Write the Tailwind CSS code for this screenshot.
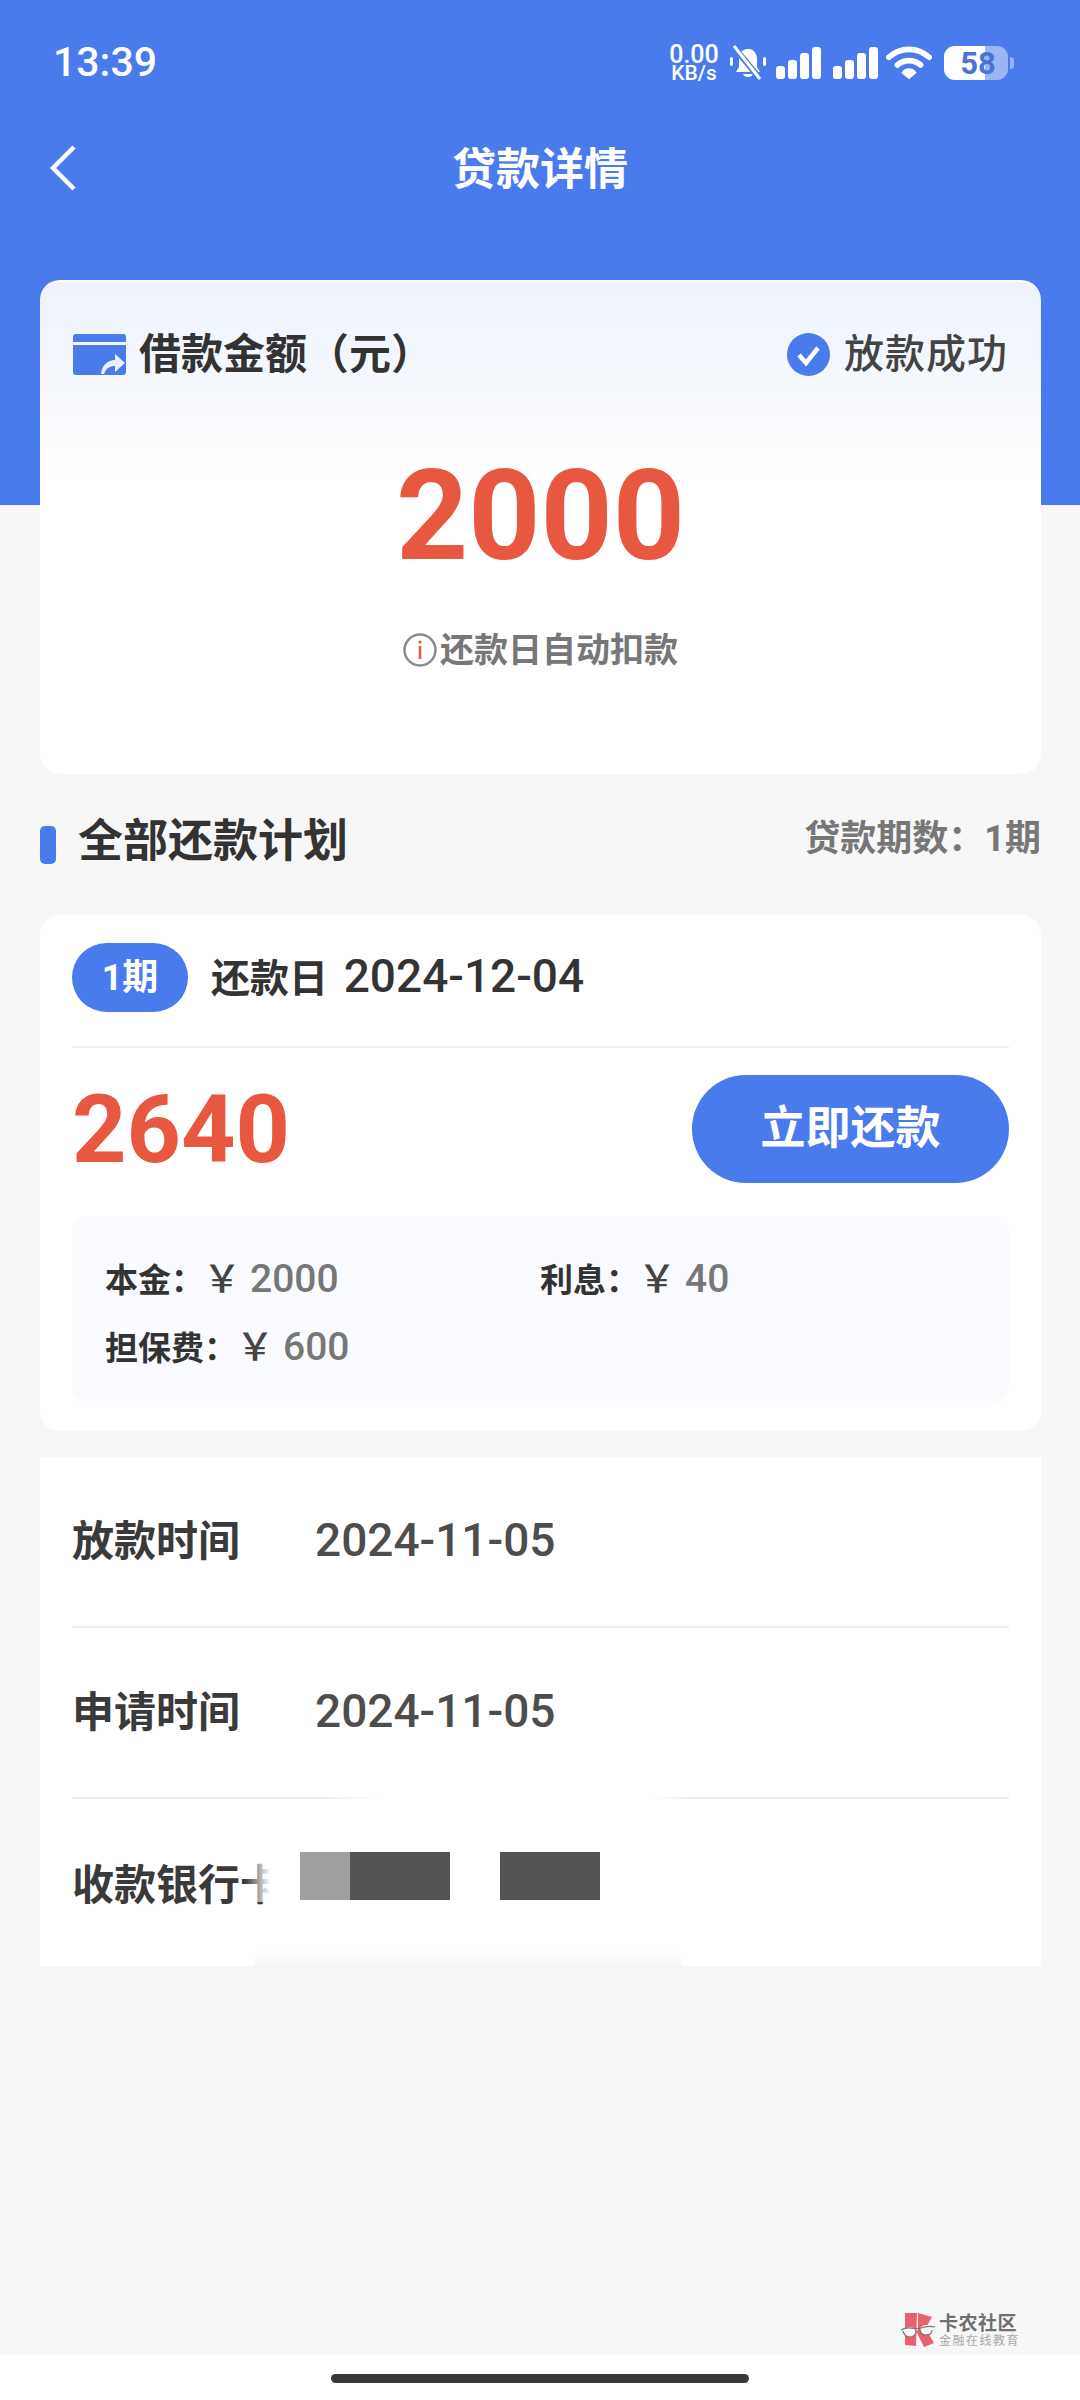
<!DOCTYPE html>
<html lang="zh-CN">

<head>
  <meta charset="UTF-8" />
  <meta name="viewport" content="width=device-width, initial-scale=1.0" />
  <title>贷款详情</title>
  <script src="https://cdn.jsdelivr.net/npm/@tailwindcss/browser@4"></script>
</head>

<body class="font-['Roboto','Noto_Sans_CJK_SC',sans-serif]">
  <div class="relative w-[1080px] h-[2400px] overflow-hidden bg-[#f7f7f7] flex flex-col text-[#333]">

    <!-- Blue header -->
    <header class="h-[505px] shrink-0 bg-[#4a7bec] text-white">
      <!-- Status bar -->
      <div class="h-[122px] pl-[53px] pr-[66px] flex items-center justify-between">
        <span class="mt-[2px] text-[41px] font-medium leading-none">13:39</span>
        <div class="mt-[4px] flex items-center">
          <div class="w-[50px] flex flex-col items-center font-medium">
            <span class="text-[25px] leading-[20px]">0.00</span>
            <span class="text-[21px] leading-[17px]">KB/s</span>
          </div>
          <svg class="ml-[10px]" width="38" height="36" viewBox="0 0 38 36" fill="white">
            <path d="M19 4c-6 0-9 5-9 10v8l-3 5h24l-3-5v-8c0-5-3-10-9-10z" />
            <path d="M14 29h10c-1 4-9 4-10 0z" />
            <rect x="1" y="12" width="3" height="9" rx="1.5" />
            <rect x="34" y="12" width="3" height="9" rx="1.5" />
            <path d="M4 1 32 35" stroke="#4a7bec" stroke-width="6" />
            <path d="M5 1 31 34" stroke="white" stroke-width="3" />
          </svg>
          <svg class="ml-[9px]" width="46" height="34" viewBox="0 0 46 34" fill="white">
            <rect x="0" y="20" width="9" height="13" rx="3" />
            <rect x="12" y="14" width="9" height="19" rx="3" />
            <rect x="24" y="7" width="9" height="26" rx="3" />
            <rect x="36" y="1" width="9" height="32" rx="3" />
          </svg>
          <svg class="ml-[11px]" width="46" height="34" viewBox="0 0 46 34" fill="white">
            <rect x="0" y="20" width="9" height="13" rx="3" />
            <rect x="12" y="14" width="9" height="19" rx="3" />
            <rect x="24" y="7" width="9" height="26" rx="3" />
            <rect x="36" y="1" width="9" height="32" rx="3" />
          </svg>
          <svg class="ml-[7px]" width="46" height="36" viewBox="0 0 48 36" fill="none" stroke="white" stroke-width="6" stroke-linecap="round">
            <path d="M3 12C15 1 33 1 45 12" />
            <path d="M12 20C19 14 29 14 36 20" />
            <path d="M18 28 24 33 30 28C27 24 21 24 18 28z" fill="white" stroke-width="3" />
          </svg>
          <div class="relative ml-[12px] w-[64px] h-[34px] rounded-[11px] bg-white/45 overflow-hidden">
            <div class="absolute inset-y-0 left-0 w-[41px] bg-white"></div>
            <span class="absolute inset-0 flex items-center justify-center pl-[4px] text-[31px] font-bold leading-none text-[#4a73d8]">58</span>
          </div>
          <div class="ml-[2px] w-[4px] h-[12px] rounded-r-full bg-white/45"></div>
        </div>
      </div>
      <!-- Nav -->
      <div class="relative h-[92px] flex items-center justify-center">
        <svg class="absolute left-[48px] top-[23px]" width="30" height="46" viewBox="0 0 30 46" fill="none" stroke="white" stroke-width="4.5">
          <path d="M26 2 5 23l21 21" />
        </svg>
        <h1 class="mt-[4px] text-[44px] font-bold leading-none">贷款详情</h1>
      </div>
    </header>

    <main class="flex-1 -mt-[225px] pl-[40px] pr-[39px] flex flex-col">
      <!-- Amount card -->
      <section class="h-[494px] rounded-[20px] border-t-2 border-white/70 bg-linear-to-b from-[#edf2fc] to-white to-[40%] px-[33px] flex flex-col items-center">
        <div class="w-full pt-[51px] flex items-center justify-between">
          <div class="flex items-center">
            <svg width="53" height="41" viewBox="0 0 53 41">
              <path d="M0 8V3a3 3 0 0 1 3-3h47a3 3 0 0 1 3 3v5z" fill="#4a7bec" />
              <path d="M0 11h53v27a3 3 0 0 1-3 3H3a3 3 0 0 1-3-3z" fill="#4a7bec" />
              <path d="M28 40c1-9 7-14 14-14v-6l10 9-10 9v-6c-5 0-9 2-11 8z" fill="#eaf0fd" />
            </svg>
            <span class="ml-[13px] text-[42px] font-bold leading-none">借款金额（元）</span>
          </div>
          <div class="flex items-center">
            <svg width="43" height="43" viewBox="0 0 43 43" fill="none">
              <circle cx="21.5" cy="21.5" r="21.5" fill="#4a7bec" />
              <path d="M12 22l7 8 12-15" stroke="white" stroke-width="4.5" />
            </svg>
            <span class="ml-[14px] text-[40px] tracking-[1px] font-medium leading-none text-[#444]">放款成功</span>
          </div>
        </div>
        <div class="mt-[77px] text-[126px] font-bold leading-none text-[#e8573f]">2000</div>
        <div class="mt-[54px] flex items-center text-[34px] font-bold leading-none text-[#777]">
          <svg width="34" height="34" viewBox="0 0 34 34" fill="none">
            <circle cx="17" cy="17" r="15.5" stroke="#8c8c8c" stroke-width="2.5" />
            <path d="M17 13v13" stroke="#e8573f" stroke-width="2.5" />
            <circle cx="17" cy="9" r="1.6" fill="#e8573f" />
          </svg>
          <span class="ml-[3px]">还款日自动扣款</span>
        </div>
      </section>

      <!-- Section title -->
      <div class="h-[141px] flex items-center justify-between">
        <div class="flex items-center">
          <span class="w-[16px] h-[38px] rounded-[5px] bg-[#4a7bec]"></span>
          <h2 class="-mt-[6px] ml-[22px] text-[45px] font-bold leading-none">全部还款计划</h2>
        </div>
        <span class="-mt-[12px] text-[36px] font-bold leading-none text-[#777]">贷款期数：1期</span>
      </div>

      <!-- Repayment plan card -->
      <section class="h-[516px] rounded-[20px] bg-white px-[32px] flex flex-col">
        <div class="h-[133px] shrink-0 border-b-2 border-[#f0f0f0] pb-[6px] flex items-center">
          <span class="w-[116px] h-[69px] rounded-full bg-[#4a7bec] text-white text-[36px] font-bold leading-none flex items-center justify-center">1期</span>
          <span class="-mt-[4px] ml-[23px] text-[39px] font-bold leading-none">还款日 <span class="ml-[6px] text-[46px] font-medium">2024-12-04</span></span>
        </div>
        <div class="mt-[27px] flex items-center justify-between">
          <span class="text-[95px] font-bold leading-none text-[#e8573f]">2640</span>
          <button class="w-[317px] h-[108px] rounded-full bg-[#4a7bec] text-white text-[45px] font-bold">立即还款</button>
        </div>
        <div class="mt-[33px] h-[187px] rounded-[16px] bg-[#fafbfe] px-[33px] pt-[44px] grid grid-cols-[435px_1fr] grid-rows-[68px_68px] text-[33px] font-bold leading-none">
          <div class="flex items-baseline">本金：<span class="-ml-[1px] text-[38px] font-medium text-[#444]">￥</span><span class="ml-[9px] text-[39px] font-medium text-[#777]">2000</span></div>
          <div class="flex items-baseline">利息：<span class="-ml-[1px] text-[38px] font-medium text-[#444]">￥</span><span class="ml-[9px] text-[39px] font-medium text-[#777]">40</span></div>
          <div class="flex items-baseline">担保费：<span class="-ml-[1px] text-[38px] font-medium text-[#444]">￥</span><span class="ml-[9px] text-[39px] font-medium text-[#777]">600</span></div>
        </div>
      </section>

      <!-- Loan info card -->
      <section class="relative mt-[26px] h-[509px] bg-white px-[32px] flex flex-col">
        <div class="h-[171px] shrink-0 border-b-2 border-[#eeeeee] flex items-center">
          <span class="w-[243px] text-[42px] font-bold leading-none text-[#3a3a3a]">放款时间</span>
          <span class="-mt-[3px] text-[46px] font-medium leading-none text-[#4d4d4d]">2024-11-05</span>
        </div>
        <div class="h-[169px] shrink-0 flex items-center">
          <span class="w-[243px] text-[42px] font-bold leading-none text-[#3a3a3a]">申请时间</span>
          <span class="-mt-[3px] text-[46px] font-medium leading-none text-[#4d4d4d]">2024-11-05</span>
        </div>
        <div class="h-[2px] shrink-0 bg-[linear-gradient(to_right,#eeeeee_27%,#ffffff_33%,#ffffff_62%,#eeeeee_66%)]"></div>
        <div class="relative flex-1 pt-[53px]">
          <div class="flex items-start">
            <span class="w-[228px] mt-[13px] text-[42px] font-bold leading-none whitespace-nowrap text-[#3a3a3a]">收款银行卡</span>
            <div class="flex h-[48px]">
              <span class="w-[50px] bg-[#9f9f9f]"></span>
              <span class="w-[100px] bg-[#545454]"></span>
              <span class="ml-[50px] w-[100px] bg-[#545454]"></span>
            </div>
          </div>
        </div>
        <!-- Smudged-out bits over the card -->
        <div class="absolute left-[205px] top-[385px] w-[50px] h-[60px] bg-linear-to-r from-white/0 to-white to-50%"></div>
        <div class="absolute left-[215px] right-[360px] bottom-0 h-[16px] rounded-t-[4px] bg-linear-to-b from-white to-[#f7f7f7]"></div>
      </section>

      <div class="absolute left-[900px] top-[2313px] flex items-center">
        <svg width="36" height="36" viewBox="0 0 36 36">
          <path d="M5 0h12l-1 33-11-1z" fill="#e8616e" />
          <path d="M18 0l14 4-8 14h-6z" fill="#e8616e" />
          <path d="M16 18l10-2 8 14-10 4z" fill="#e8616e" />
          <ellipse cx="10" cy="19" rx="6" ry="5" fill="#f7f7f7" />
          <ellipse cx="26" cy="17" rx="6" ry="5" fill="#f7f7f7" />
          <path d="M1 17c3-2 8-3 15-1 3-1 3-1 5-1 5-2 9-2 14-1M32 17c0 3-2 5-6 5s-6-2-6-6M16 17c0 4-2 7-6 7s-6-2-7-6" fill="none" stroke="#777" stroke-width="1.2" />
        </svg>
        <div class="ml-[3px] flex flex-col items-start">
          <span class="text-[19px] font-bold leading-[21px] tracking-[0.5px] text-[#707070]">卡农社区</span>
          <span class="text-[12px] leading-[15px] tracking-[1.5px] text-[#a8a8a8]">金融在线教育</span>
        </div>
      </div>
    </main>

    <!-- Home indicator -->
    <footer class="h-[45px] shrink-0 bg-white flex justify-center pt-[19px]">
      <span class="w-[418px] h-[9px] rounded-full bg-[#3a3a3a]"></span>
    </footer>
  </div>
</body>

</html>
